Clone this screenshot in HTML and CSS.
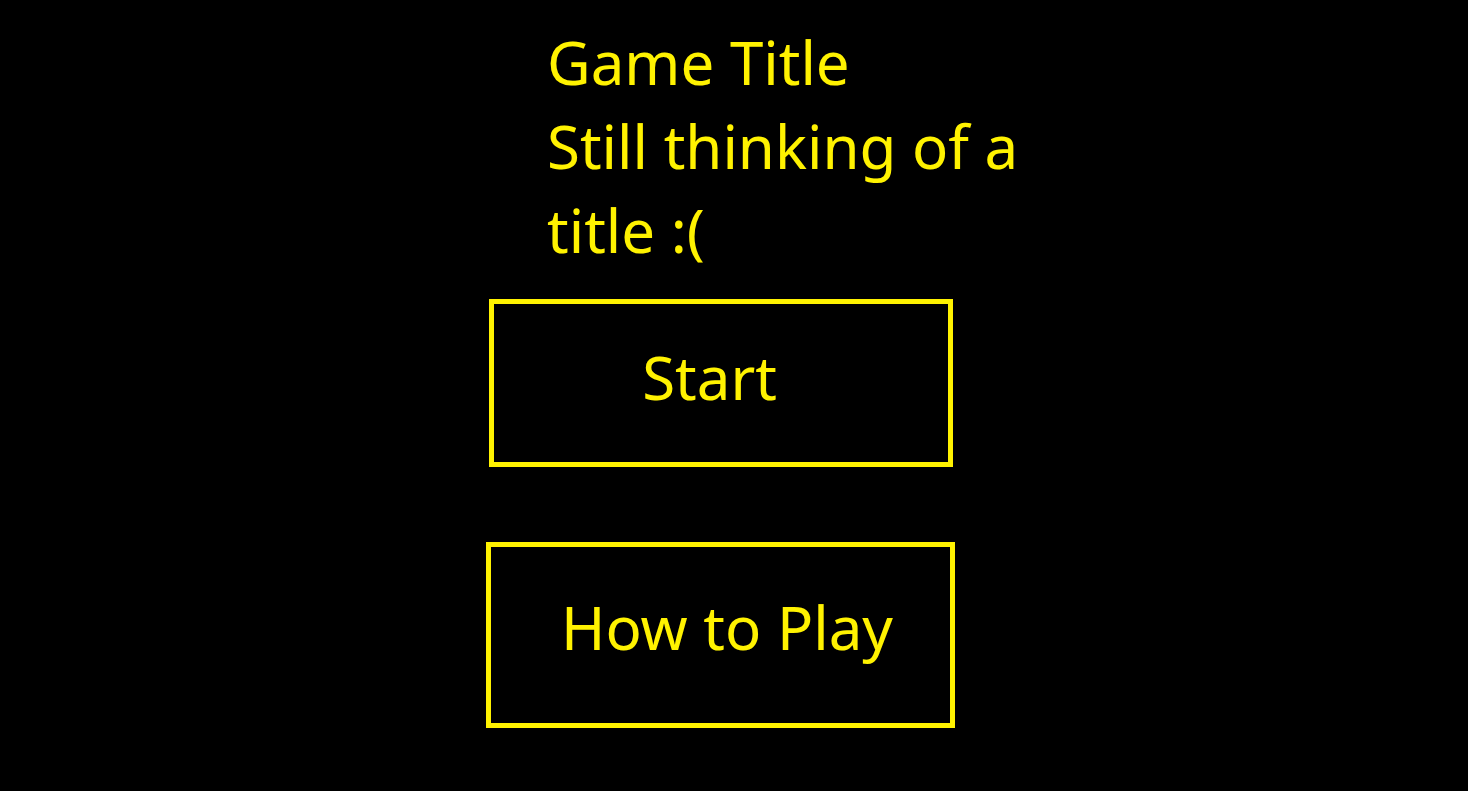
FILE: index.html
```html
<!DOCTYPE html>
<html lang="en">
<head>
<meta charset="utf-8">
<title>Game Title</title>
<link rel="stylesheet" href="styles.css">
</head>
<body>
<main class="menu">
  <h1 class="title">Game Title<br>Still thinking of a title :(</h1>
  <button class="btn btn-start">Start</button>
  <button class="btn btn-how">How to Play</button>
</main>
</body>
</html>
```
FILE: styles.css
```css
html, body {
  margin: 0;
  padding: 0;
  background: #000;
  height: 100%;
}
body {
  font-family: "Noto Sans", "Open Sans", sans-serif;
  color: #fff200;
  overflow: hidden;
}
.menu {
  display: flex;
  flex-direction: column;
  align-items: flex-start;
  padding-top: 20px;
}
.title {
  margin: 0 0 0 547px;
  width: 480px;
  font-size: 60px;
  font-weight: 400;
  line-height: 84px;
}
.btn {
  display: block;
  box-sizing: border-box;
  background: #000;
  color: #fff200;
  border: 5px solid #fff200;
  font-family: inherit;
  font-size: 60px;
  line-height: 84px;
  text-align: center;
  margin: 0;
}
.btn-start {
  margin: 27px 0 0 489px;
  width: 464px;
  height: 168px;
  padding: 0 23px 12px 0;
}
.btn-how {
  margin: 75px 0 0 486px;
  width: 469px;
  height: 186px;
  padding: 0 0 16px 13px;
}
```
